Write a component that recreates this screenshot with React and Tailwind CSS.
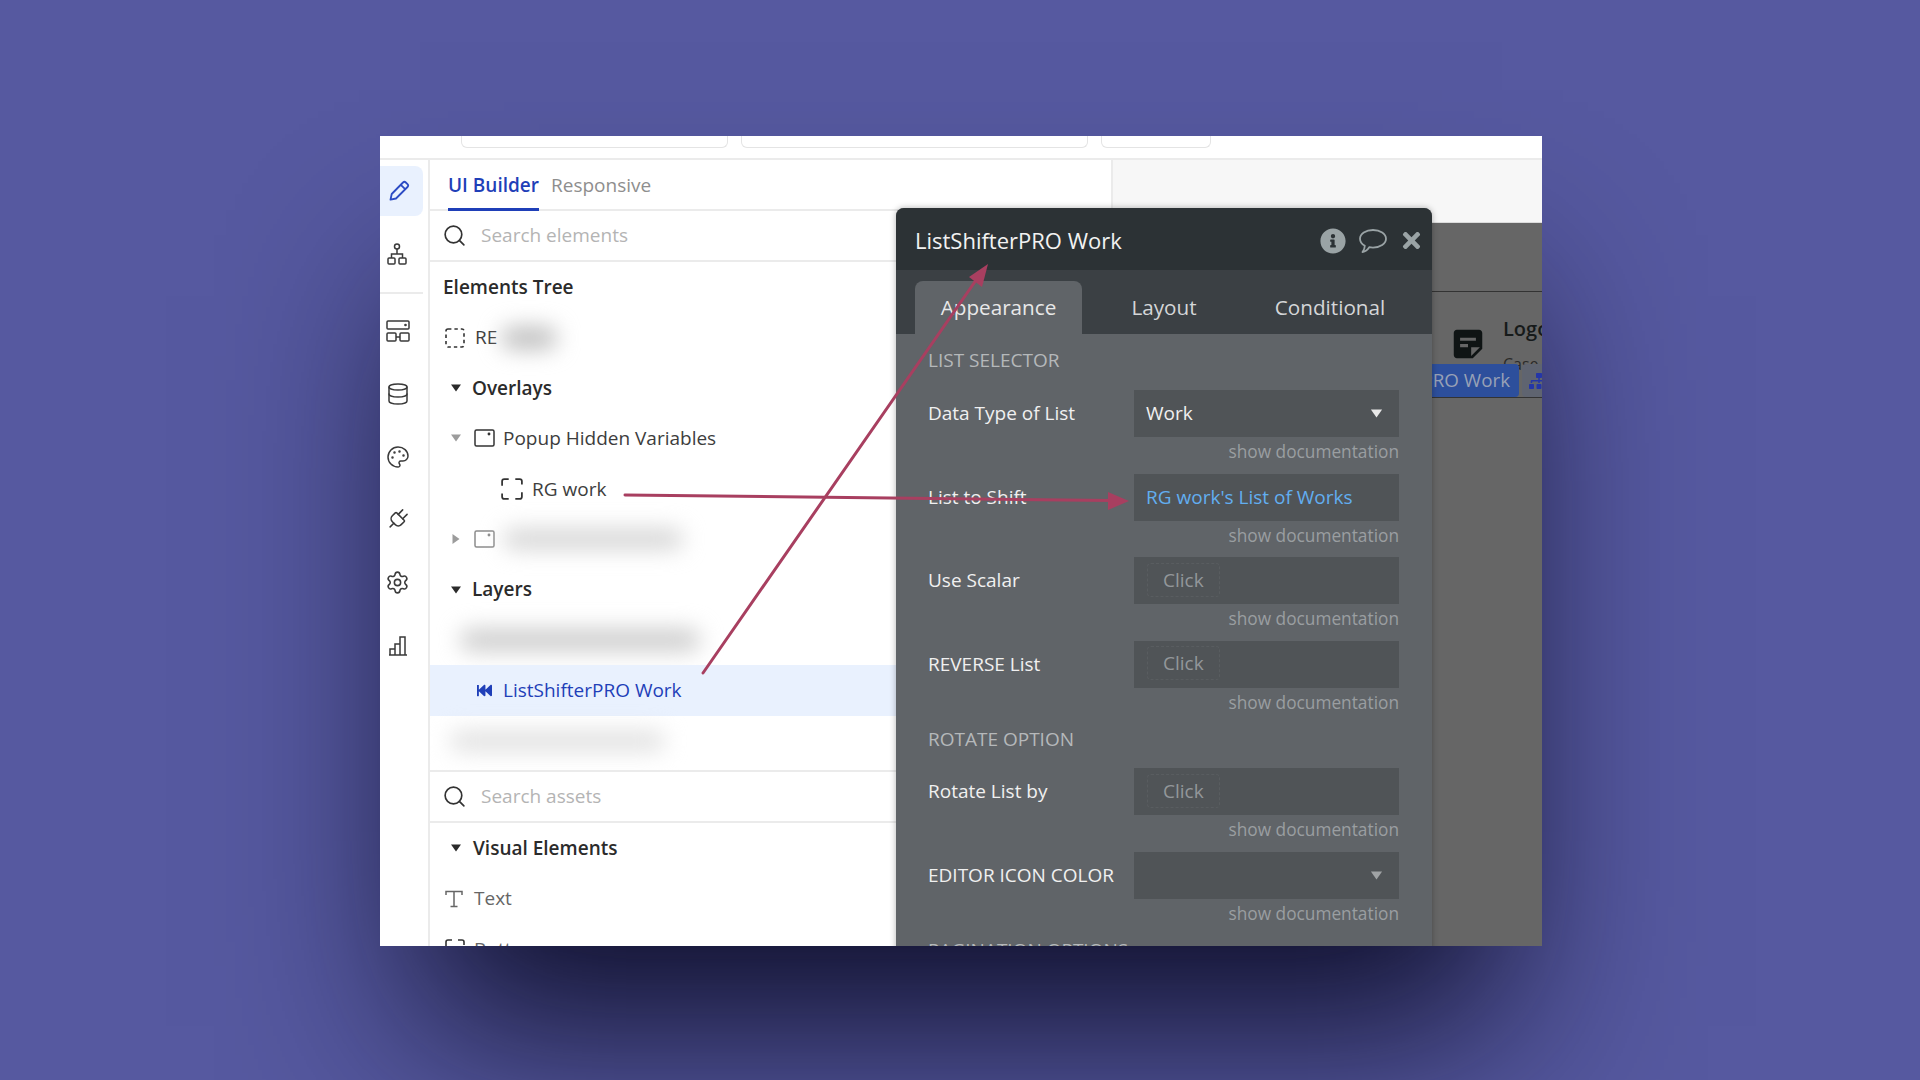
import React from "react";
import { Database, Palette, Plug, Settings, Search } from "lucide-react";
import { FaInfoCircle, FaTimes, FaFastBackward, FaSitemap } from "react-icons/fa";
import { MdStickyNote2 } from "react-icons/md";

const Caret = ({ open = true, className = "" }) => (
  <svg viewBox="0 0 10 8" className={`h-[8px] w-[10px] ${open ? "" : "-rotate-90"} ${className}`} fill="currentColor">
    <path d="M0 0.5h10L5 7.5z" />
  </svg>
);

const PencilIcon = () => (
  <svg viewBox="0 0 22 22" className="h-[22px] w-[22px]" fill="none" stroke="#2c4bc4" strokeWidth="1.8" strokeLinejoin="round">
    <path d="M15 2.5a2 2 0 012.8 0l1.7 1.7a2 2 0 010 2.8L8 18.5l-5.5 1.2L3.7 14z" />
    <path d="M12.8 4.8l4.4 4.4" />
  </svg>
);

const HierarchyIcon = () => (
  <svg viewBox="0 0 20 22" className="h-[22px] w-[20px]" fill="none" stroke="#3a3a3a" strokeWidth="1.5">
    <circle cx="10" cy="3.5" r="2.5" />
    <path d="M10 6v5M4.5 15v-4h11v4" />
    <rect x="1" y="15" width="7" height="6" rx="1" />
    <rect x="12" y="15" width="7" height="6" rx="1" />
  </svg>
);

const LayoutIcon = () => (
  <svg viewBox="0 0 24 22" className="h-[22px] w-[24px]" fill="none" stroke="#3a3a3a" strokeWidth="1.5">
    <rect x="1" y="1" width="22" height="8" rx="1" />
    <rect x="1" y="13" width="9" height="8" rx="1" />
    <rect x="14" y="13" width="9" height="8" rx="1" />
    <path d="M10 17h4" />
    <circle cx="19.5" cy="5" r="0.6" fill="#3a3a3a" />
  </svg>
);

const ChartIcon = () => (
  <svg viewBox="0 0 20 20" className="h-[20px] w-[20px]" fill="none" stroke="#3a3a3a" strokeWidth="1.5">
    <path d="M1 19h18M2 19v-6h5v6M7 19V8h5v11M12 19V1h5v18" />
  </svg>
);

const TextIcon = () => (
  <svg viewBox="0 0 18 18" className="h-[18px] w-[18px]" fill="none" stroke="#666" strokeWidth="1.5">
    <path d="M1 5V1.500h16V5M9 1.500v15M5.500 16.500h7" />
  </svg>
);

const CommentIcon = () => (
  <svg viewBox="0 0 30 26" className="h-[26px] w-[30px]" fill="none" stroke="#9aa3a5" strokeWidth="1.8" strokeLinejoin="round">
    <path d="M15 2c7.200 0 13 3.900 13 8.800s-5.800 8.800-13 8.800c-1.300 0-2.600-.1-3.800-.4C9.800 21.500 7.500 23.500 4.500 24c1.400-1.700 2.200-3.600 2.300-6.200C3.900 16.200 2 13.700 2 10.800 2 5.900 7.800 2 15 2z" />
  </svg>
);

const DashedBox = ({ corners = false, className = "" }) => (
  <svg viewBox="0 0 20 20" className={`h-[20px] w-[20px] ${className}`} fill="none" stroke="#333" strokeWidth="1.6">
    {corners ? (
      <path d="M1 7V3a2 2 0 012-2h4M13 1h4a2 2 0 012 2v3M19 13v4a2 2 0 01-2 2h-4M7 19H3a2 2 0 01-2-2v-3" />
    ) : (
      <path strokeDasharray="3.4 3" d="M3 1h14a2 2 0 012 2v14a2 2 0 01-2 2H3a2 2 0 01-2-2V3a2 2 0 012-2z" />
    )}
  </svg>
);

const PopupIcon = ({ faded = false }) => (
  <svg viewBox="0 0 21 18" className="h-[18px] w-[21px]" fill="none" stroke={faded ? "#8c8c8c" : "#333"} strokeWidth="1.5">
    <rect x="1" y="1" width="19" height="16" rx="1.5" />
    <circle cx="15" cy="5" r="0.7" fill={faded ? "#8c8c8c" : "#333"} />
  </svg>
);

const Blur = ({ className }) => <div className={`rounded-full blur-[11px] ${className}`} />;

const Row = ({ children, className = "" }) => (
  <div className={`relative flex h-[50.4px] items-center ${className}`}>{children}</div>
);

const SearchRow = ({ label }) => (
  <div className="flex h-[51px] items-center gap-[14px] border-b-2 border-[#ebebeb] pl-[12px]">
    <Search size={25} strokeWidth={1.6} color="#333" />
    <span className="text-[19px] text-[#b4b4b4]">{label}</span>
  </div>
);

const Rail = () => (
  <div className="flex w-[50px] shrink-0 flex-col border-r-2 border-[#ebebeb]">
    <div className="mt-[6px] flex h-[50px] w-[43px] items-center justify-center rounded-r-lg bg-[#e9f1fe] pr-[6px]">
      <PencilIcon />
    </div>
    <div className="flex h-[76px] items-center justify-center pr-[15px] pb-[1px]"><HierarchyIcon /></div>
    <div className="h-[2px] w-[43px] bg-[#ebebeb]" />
    <div className="flex flex-col items-center pr-[13px] pt-[5px] text-[#3a3a3a]">
      <div className="flex h-[63px] items-center"><LayoutIcon /></div>
      <div className="flex h-[63px] items-center"><Database size={24} strokeWidth={1.5} /></div>
      <div className="flex h-[63px] items-center"><Palette size={24} strokeWidth={1.5} /></div>
      <div className="flex h-[63px] items-center"><Plug size={25} strokeWidth={1.5} className="rotate-45" /></div>
      <div className="flex h-[63px] items-center"><Settings size={25} strokeWidth={1.5} /></div>
      <div className="flex h-[63px] items-center"><ChartIcon /></div>
    </div>
  </div>
);

const ElementsPanel = () => (
  <div className="w-[683px] shrink-0 border-r-2 border-[#ebebeb] text-[19px] text-[#3d3d3d]">
    <div className="flex h-[51px] gap-[12px] border-b-2 border-[#ebebeb] pl-[18px]">
      <span className="flex h-[51px] items-center border-b-[3px] border-[#1f3fb8] pt-[3px] font-semibold text-[#1f3fb8]">UI Builder</span>
      <span className="flex h-[49px] items-center pt-[1px] text-[#8e8e8e]">Responsive</span>
    </div>
    <SearchRow label="Search elements" />
    <div className="h-[508px] overflow-hidden">
      <Row className="pl-[13px] font-semibold text-[#2b2b2b]">Elements Tree</Row>
      <Row className="pl-[15px]">
        <DashedBox />
        <span className="ml-[10px]">RE</span>
        <Blur className="ml-[4px] h-[22px] w-[56px] bg-[#bdbdbd]" />
      </Row>
      <Row className="pl-[21px] font-semibold text-[#2b2b2b]">
        <Caret />
        <span className="ml-[11px]">Overlays</span>
      </Row>
      <Row className="pl-[21px]">
        <Caret className="text-[#9c9c9c]" />
        <span className="ml-[13px]"><PopupIcon /></span>
        <span className="ml-[8px]">Popup Hidden Variables</span>
      </Row>
      <Row className="pl-[71px]">
        <DashedBox corners className="h-[22px] w-[22px]" />
        <span className="ml-[9px]">RG work</span>
      </Row>
      <Row className="pl-[21px]">
        <Caret open={false} className="text-[#9c9c9c]" />
        <span className="ml-[13px]"><PopupIcon faded /></span>
        <Blur className="ml-[8px] h-[20px] w-[180px] bg-[#d4d4d4]" />
      </Row>
      <Row className="pl-[21px]">
        <Caret className="text-[#2b2b2b]" />
        <span className="ml-[11px] font-semibold text-[#2b2b2b]">Layers</span>
      </Row>
      <Row className="pl-[30px]">
        <Blur className="h-[22px] w-[240px] bg-[#cccccc]" />
      </Row>
      <Row className="bg-[#e9f1fe] pl-[47px] text-[#1f3fb8]">
        <FaFastBackward size={15} />
        <span className="ml-[11px]">ListShifterPRO Work</span>
      </Row>
      <Row className="pl-[20px]">
        <Blur className="h-[20px] w-[215px] bg-[#e0e0e0]" />
      </Row>
    </div>
    <div className="border-t-2 border-[#ebebeb]">
      <SearchRow label="Search assets" />
      <Row className="pl-[21px] font-semibold text-[#2b2b2b]">
        <Caret />
        <span className="ml-[12px]">Visual Elements</span>
      </Row>
      <Row className="pl-[15px]">
        <TextIcon />
        <span className="ml-[11px] text-[#666]">Text</span>
      </Row>
      <Row className="pl-[15px]">
        <DashedBox corners />
        <span className="ml-[9px] text-[#666]">Button</span>
      </Row>
    </div>
  </div>
);

const Field = ({ label, value, placeholder, select, blue }) => (
  <div>
    <div className="flex items-center">
      <span className="w-[206px] text-[#f0f0f0]">{label}</span>
      <div className="flex h-[47px] w-[265px] items-center justify-between bg-[#505457] pr-[16px]">
        {placeholder ? (
          <span className="-mt-[2px] ml-[13px] rounded border border-dashed border-[#595d60] px-[15px] leading-[32px] text-[#93979a]">{placeholder}</span>
        ) : (
          <span className={`ml-[12px] ${blue ? "text-[#62aef0]" : "text-[#f0f0f0]"}`}>{value}</span>
        )}
        {select && <Caret className={`h-[9px] w-[13px] ${value ? "text-[#e8e8e8]" : "text-[#a0a3a5]"}`} />}
      </div>
    </div>
    <div className="h-[36.5px] text-right text-[17.3px] leading-[30px] text-[#9a9ea1]">show documentation</div>
  </div>
);

const SectionLabel = ({ children, className = "" }) => (
  <div className={`text-[19px] leading-[30px] text-[#b5b8ba] ${className}`}>{children}</div>
);

const PropertyEditor = () => (
  <div className="absolute left-[516px] top-[72px] h-[780px] w-[536px] rounded-t-lg bg-[#606468] text-[19px] shadow-[0_0_6px_rgba(0,0,0,0.3)]">
    <div className="flex h-[62px] items-center justify-between rounded-t-lg bg-[#2c3235] pl-[19px] pr-[8px] pt-[3px]">
      <span className="text-[22px] text-[#f2f2f2]">ListShifterPRO Work</span>
      <div className="flex items-center text-[#9aa3a5]">
        <FaInfoCircle size={26} />
        <span className="ml-[12px]"><CommentIcon /></span>
        <FaTimes size={25} className="ml-[11px]" />
      </div>
    </div>
    <div className="flex h-[64px] items-end bg-[#3b4044] pl-[19px] text-[20.7px] text-[#d4d6d8]">
      <div className="flex h-[53px] w-[167px] items-center justify-center rounded-t-lg bg-[#606468] text-[#e8e8e8]">Appearance</div>
      <div className="flex h-[53px] w-[164px] items-center justify-center">Layout</div>
      <div className="flex h-[53px] w-[168px] items-center justify-center">Conditional</div>
    </div>
    <div className="pl-[32px] pr-[33px] pt-[11px]">
      <SectionLabel className="h-[45px]">LIST SELECTOR</SectionLabel>
      <Field label="Data Type of List" value="Work" select />
      <Field label="List to Shift" value="RG work's List of Works" blue />
      <Field label="Use Scalar" placeholder="Click" />
      <Field label="REVERSE List" placeholder="Click" />
      <SectionLabel className="h-[44px]">ROTATE OPTION</SectionLabel>
      <Field label="Rotate List by" placeholder="Click" />
      <Field label="EDITOR ICON COLOR" select />
      <SectionLabel>PAGINATION OPTIONS</SectionLabel>
    </div>
  </div>
);

const Canvas = () => (
  <div className="min-w-0 flex-1 overflow-hidden bg-[#666666]">
    <div className="h-[63px] border-b border-[#dcdcdc] bg-[#f7f7f7]" />
    <div className="relative ml-[250px] mt-[68px] h-[107px] w-[300px] rounded-tl-lg border border-[#333333]">
      <MdStickyNote2 size={38} color="#0f1414" className="absolute left-[85px] top-[33px]" />
      <span className="absolute left-[139px] top-[22px] text-[20px] font-semibold text-[#161a1a]">Logo</span>
      <span className="absolute left-[139px] top-[60px] text-[#2a2a2a]">Case</span>
      <div className="absolute left-[-100px] top-[72px] flex h-[33px] w-[255px] items-center justify-end rounded-r bg-[#2d4f9c] pb-[1px] pr-[9px] text-[18.8px] font-medium text-[#98a1b6]">ListShifterPRO Work</div>
      <div className="absolute left-[158px] top-[72px] flex h-[33px] w-[30px] items-center rounded-l bg-[#5f6470] pl-[7px] text-[#2436a8]">
        <FaSitemap size={20} />
      </div>
    </div>
  </div>
);

const Arrows = () => (
  <svg className="pointer-events-none absolute left-0 top-0 h-full w-full" viewBox="0 0 1162 810" fill="none">
    <path d="M245 359L732 364.5" stroke="#a83f60" strokeWidth="3" strokeLinecap="round" />
    <path d="M749 365L728 356V374z" fill="#a83f60" />
    <path d="M323 537L601 137" stroke="#a83f60" strokeWidth="3" strokeLinecap="round" />
    <path d="M608 128L589 141l13 10z" fill="#a83f60" />
  </svg>
);

const App = () => (
  <div className="h-screen overflow-hidden bg-[#5659a0] pl-[380px] pt-[136px] font-['Open_Sans',sans-serif]">
    <div className="relative flex h-[810px] w-[1162px] flex-col bg-white shadow-[0_120px_170px_-40px_rgba(10,10,35,0.95)]">
      <div className="relative h-[24px] shrink-0 overflow-hidden border-b-2 border-[#ebebeb]">
        <div className="flex gap-[13px] pl-[81px]">
          <div className="h-[12px] w-[267px] rounded-b-md border border-t-0 border-[#e4e4e4]" />
          <div className="h-[12px] w-[347px] rounded-b-md border border-t-0 border-[#e4e4e4]" />
          <div className="h-[12px] w-[110px] rounded-b-md border border-t-0 border-[#e4e4e4]" />
        </div>
      </div>
      <div className="relative flex min-h-0 flex-1 overflow-hidden">
        <Rail />
        <ElementsPanel />
        <Canvas />
      </div>
      <div className="absolute inset-0 overflow-hidden">
        <PropertyEditor />
        <Arrows />
      </div>
    </div>
  </div>
);

export default App;
